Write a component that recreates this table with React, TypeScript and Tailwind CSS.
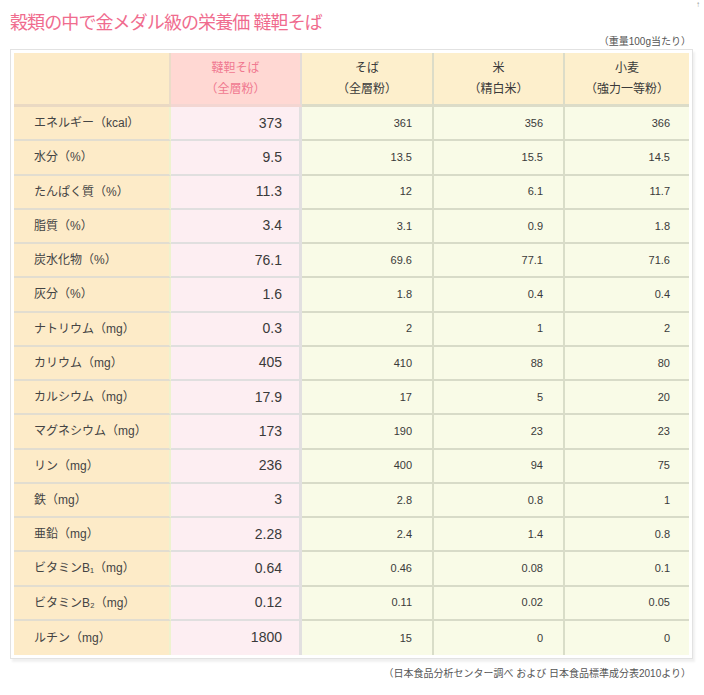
const rows: [string, string, string, string, string][] = [
  ['エネルギー（kcal）', '373', '361', '356', '366'],
  ['水分（%）', '9.5', '13.5', '15.5', '14.5'],
  ['たんぱく質（%）', '11.3', '12', '6.1', '11.7'],
  ['脂質（%）', '3.4', '3.1', '0.9', '1.8'],
  ['炭水化物（%）', '76.1', '69.6', '77.1', '71.6'],
  ['灰分（%）', '1.6', '1.8', '0.4', '0.4'],
  ['ナトリウム（mg）', '0.3', '2', '1', '2'],
  ['カリウム（mg）', '405', '410', '88', '80'],
  ['カルシウム（mg）', '17.9', '17', '5', '20'],
  ['マグネシウム（mg）', '173', '190', '23', '23'],
  ['リン（mg）', '236', '400', '94', '75'],
  ['鉄（mg）', '3', '2.8', '0.8', '1'],
  ['亜鉛（mg）', '2.28', '2.4', '1.4', '0.8'],
  ['ビタミンB₁（mg）', '0.64', '0.46', '0.08', '0.1'],
  ['ビタミンB₂（mg）', '0.12', '0.11', '0.02', '0.05'],
  ['ルチン（mg）', '1800', '15', '0', '0'],
];

const jp = 'font-["Liberation_Sans","Noto_Sans_CJK_JP",sans-serif]';

const App = () => {
  return (
    <div className={`relative h-[695px] w-[704px] overflow-hidden bg-white ${jp}`}>
      <span className="absolute right-[4px] top-0 text-[8px] leading-[10px] text-[#999]">↑</span>
      <div className="pl-[10px] pr-[11px] pt-[10px]">
        <h1 className="text-[18px] leading-[26px] tracking-[-0.9px] text-[#f06c8e]">
          穀類の中で金メダル級の栄養価 韃靼そば
        </h1>
        <p className="pr-[2px] text-right text-[10px] leading-[12px] text-[#555]">（重量100g当たり）</p>
        <div className="mt-[1px] border border-[#e2e2e2] p-[3px] shadow-[2px_3px_2px_rgba(0,0,0,0.06)]">
          <table className="w-full table-fixed border-separate border-spacing-0 text-[12px] text-[#3a3a3a]">
            <colgroup>
              <col className="w-[157px]" />
              <col className="w-[131px]" />
              <col className="w-[132px]" />
              <col className="w-[131px]" />
              <col />
            </colgroup>
            <thead>
              <tr className="h-[54px]">
                <th className="border-b-[3px] border-r-2 border-[#ead9c3] border-r-[#eadcc8] bg-[#fdebc8]"></th>
                <th className="border-b-[3px] border-r-2 border-[#f3d6d2] border-r-[#e4dcd8] bg-[#ffd8d3] font-normal leading-[21px] text-[#f07890]">
                  韃靼そば
                  <br />
                  （全層粉）
                </th>
                <th className="border-b-[3px] border-r-2 border-[#dcdcc8] bg-[#fdefcc] font-normal leading-[21px]">
                  そば
                  <br />
                  （全層粉）
                </th>
                <th className="border-b-[3px] border-r-2 border-[#dcdcc8] bg-[#fdefcc] font-normal leading-[21px]">
                  米
                  <br />
                  （精白米）
                </th>
                <th className="border-b-[3px] border-[#dcdcc8] bg-[#fdefcc] font-normal leading-[21px]">
                  小麦
                  <br />
                  （強力一等粉）
                </th>
              </tr>
            </thead>
            <tbody>
              {rows.map(([label, tartary, soba, rice, wheat], i) => {
                const last = i === rows.length - 1;
                return (
                  <tr key={label} className="h-[34.25px]">
                    <td
                      className={`border-r-2 border-r-[#eef2cf] bg-[#fdebc8] pl-[20px] text-[#444] ${last ? '' : 'border-b-2 border-b-[#e2ddd0]'}`}
                    >
                      {label}
                    </td>
                    <td
                      className={`border-r-[3px] border-r-[#e2e0e0] bg-[#fdeef2] pr-[17px] text-right text-[14px] ${last ? '' : 'border-b-2 border-b-[#e0dfdf]'}`}
                    >
                      {tartary}
                    </td>
                    <td
                      className={`border-r-2 border-r-[#d9ddc8] bg-[#f9fbe7] pr-[20px] text-right text-[11px] ${last ? '' : 'border-b-2 border-b-[#d8dbc8]'}`}
                    >
                      {soba}
                    </td>
                    <td
                      className={`border-r-2 border-r-[#d9ddc8] bg-[#f9fbe7] pr-[20px] text-right text-[11px] ${last ? '' : 'border-b-2 border-b-[#d8dbc8]'}`}
                    >
                      {rice}
                    </td>
                    <td
                      className={`bg-[#f9fbe7] pr-[19px] text-right text-[11px] ${last ? '' : 'border-b-2 border-b-[#d8dbc8]'}`}
                    >
                      {wheat}
                    </td>
                  </tr>
                );
              })}
            </tbody>
          </table>
        </div>
        <p className="mt-[9px] pr-[2px] text-right text-[10px] leading-[12px] text-[#555]">
          （日本食品分析センター調べ および 日本食品標準成分表2010より）
        </p>
      </div>
    </div>
  );
};

export default App;
